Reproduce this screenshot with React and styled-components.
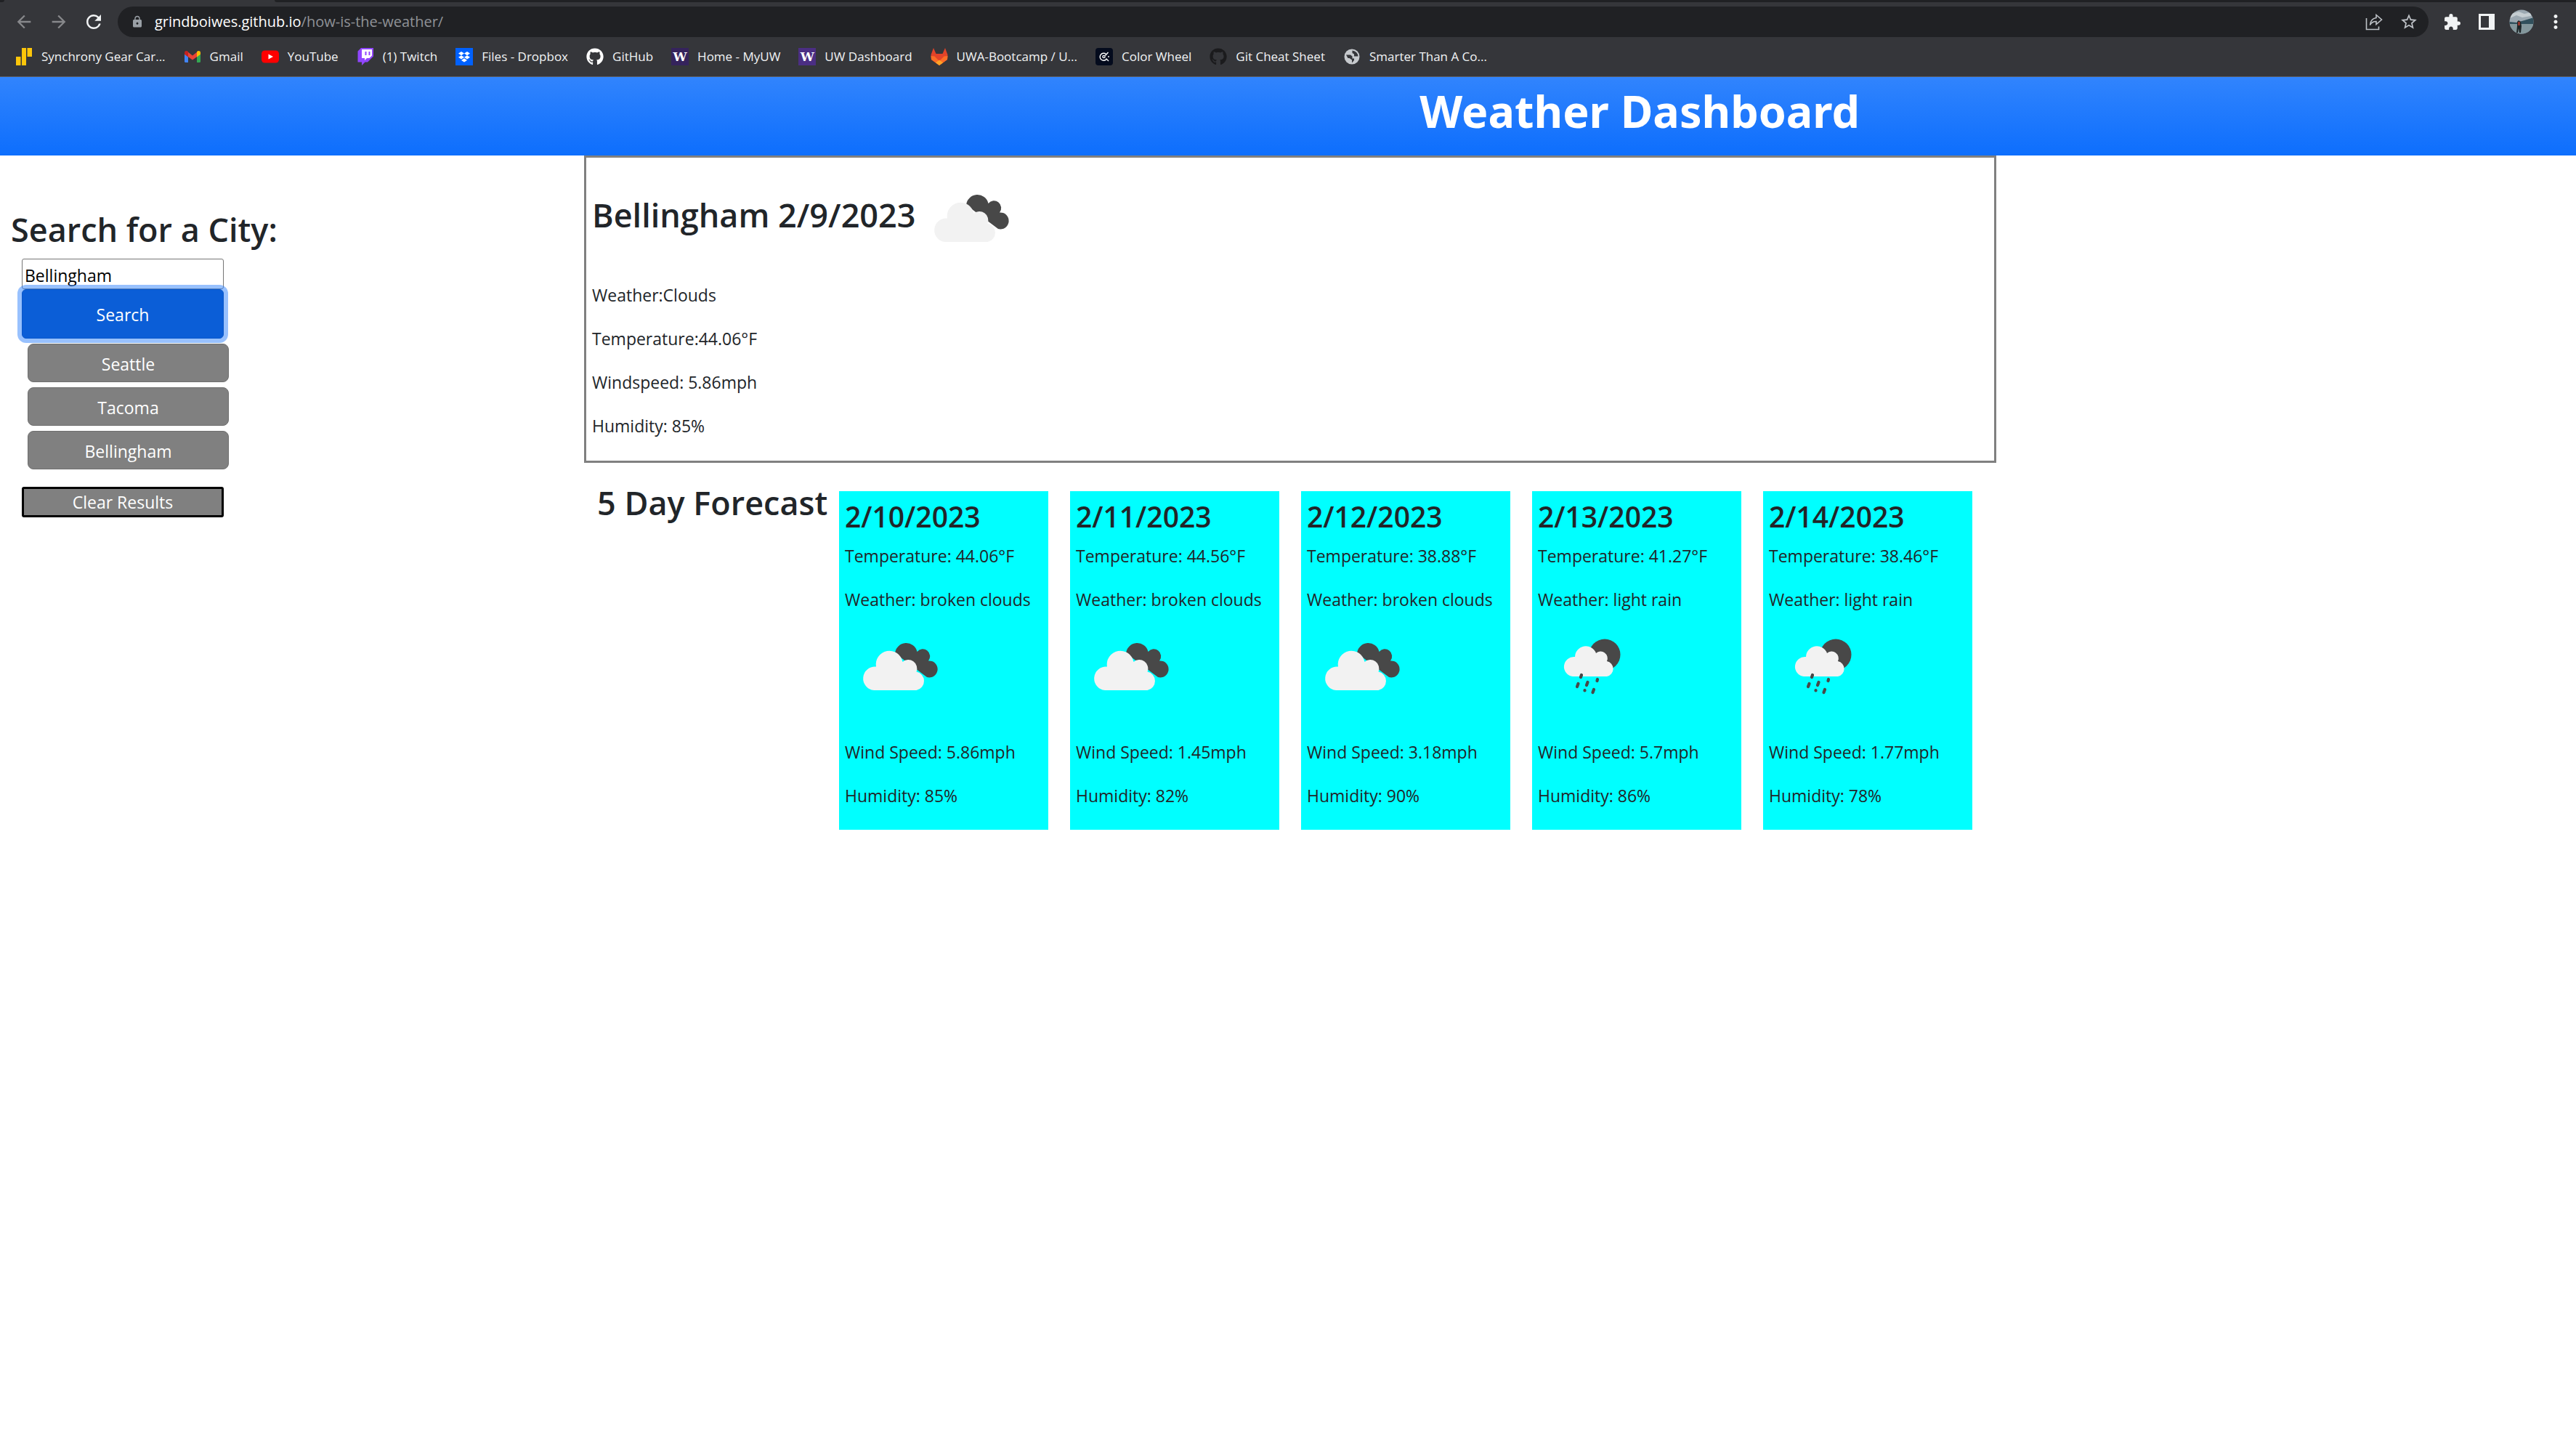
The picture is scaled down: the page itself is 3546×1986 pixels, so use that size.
import React from 'react';
import styled, { createGlobalStyle } from 'styled-components';
import { FaGithub } from 'react-icons/fa';
import { MdArrowBack, MdArrowForward, MdRefresh, MdLock, MdExtension, MdMoreVert, MdStarOutline } from 'react-icons/md';

const UI_FONT = '"Open Sans", "Noto Sans", sans-serif';

const GlobalStyle = createGlobalStyle`
  *, *::before, *::after { box-sizing: border-box; }
  body {
    margin: 0;
    background: #fff;
    color: #212529;
    font-family: ${UI_FONT};
    font-size: 23px;
    line-height: 36px;
  }
  h1, h2, h3, p, ul { margin: 0; padding: 0; }
  button, input { font: inherit; }
`;

/* ---------- browser frame ---------- */

const Browser = styled.div`
  background: #35363a;
  border-bottom: 1px solid #5b5c60;
`;

const TabStrip = styled.div`
  display: grid;
  grid-template-columns: 6px 372px 1fr;
  height: 3px;
  background: #35363a;
`;

const TabGap = styled.div`
  background: #202124;
  grid-column: ${(p) => p.$column};
  border-bottom-right-radius: ${(p) => (p.$column === 1 ? '3px' : 0)};
  border-bottom-left-radius: ${(p) => (p.$column === 3 ? '3px' : 0)};
`;

const Toolbar = styled.div`
  display: flex;
  align-items: center;
  height: 54px;
  padding: 0 13px 0 18px;
`;

const ToolButton = styled.button`
  display: flex;
  align-items: center;
  justify-content: center;
  flex: none;
  width: ${(p) => p.$width || 48}px;
  height: 40px;
  padding: 0;
  border: 0;
  background: none;
  color: ${(p) => p.$color || '#f1f3f4'};
`;

const NavGroup = styled.div`
  display: flex;
  width: 144px;
  margin-left: -9px;
  margin-right: 9px;
`;

const AddressBar = styled.div`
  display: flex;
  flex: 1;
  align-items: center;
  height: 42px;
  padding: 0 3px 0 18px;
  border-radius: 21px;
  background: #202124;
  color: #9aa0a6;
`;

const Address = styled.a`
  flex: 1;
  margin-left: 15px;
  color: #8f9297;
  font-size: 20px;
  text-decoration: none;
`;

const Host = styled.span`
  color: #fff;
`;

const Bookmarks = styled.nav`
  display: flex;
  align-items: center;
  gap: 25px;
  height: 48px;
  padding: 0 21px 6px;
`;

const Bookmark = styled.a`
  display: flex;
  align-items: center;
  gap: 12px;
  color: #f1f3f4;
  font-size: 17px;
  line-height: 24px;
  text-decoration: none;
  white-space: nowrap;
`;

const Glyph = styled.svg`
  display: block;
  flex: none;
`;

const SynchronyIcon = () => (
  <Glyph width="24" height="24" viewBox="0 0 24 24" fill="#fdc60a">
    <path d="M1 12h6.500v12H1zM9 0h6v24H9zM16.500 0H23v12h-6.500z" />
  </Glyph>
);

const GmailIcon = () => (
  <Glyph width="24" height="24" viewBox="0 0 24 24">
    <path fill="#4285f4" d="M1 8l5 4v8H2.500Q1 20 1 18.500z" />
    <path fill="#34a853" d="M18 12l5-4v10.500Q23 20 21.500 20H18z" />
    <path fill="#ea4335" d="M5 5l7 5.500L19 5v6.500l-7 5-7-5z" />
    <path fill="#c5221f" d="M1 6.500Q1 4 3.500 4 5 4 6 5.200v7.300L1 8.800z" />
    <path fill="#fbbc04" d="M23 6.500Q23 4 20.500 4 19 4 18 5.200v7.300l5-3.700z" />
  </Glyph>
);

const YouTubeIcon = () => (
  <Glyph width="24" height="24" viewBox="0 0 24 24">
    <rect x="0" y="3.500" width="24" height="17" rx="4.500" fill="#f00" />
    <path d="M9.500 8.500l6.500 3.500-6.500 3.500z" fill="#fff" />
  </Glyph>
);

const TwitchIcon = () => (
  <Glyph width="24" height="24" viewBox="0 0 24 24">
    <path fill="#9146ff" d="M6 0L1.500 4.500v15H7V24l4.500-4.500H15l8-8V0z" />
    <path fill="#fff" d="M7 2h14v8.500L17.500 14H14l-3 3v-3H7z" />
    <path fill="#9146ff" d="M11.500 5h2v5h-2zM16.500 5h2v5h-2z" />
  </Glyph>
);

const DropboxIcon = () => (
  <Glyph width="24" height="24" viewBox="0 0 24 24">
    <path fill="#0061ff" d="M0 0h24v24H0z" />
    <path fill="#fff" d="M8 5l4 2.600-4 2.600-4-2.600zM16 5l4 2.600-4 2.600-4-2.600zM8 10.200l4 2.600-4 2.600-4-2.600zM16 10.200l4 2.600-4 2.600-4-2.600zM12 14.300l4 2.600-4 2.600-4-2.600z" />
  </Glyph>
);

const UwBadge = styled.span`
  display: flex;
  align-items: center;
  justify-content: center;
  width: 24px;
  height: 24px;
  background: ${(p) => p.$color};
  color: #fff;
  font: 700 17px/24px "DejaVu Serif", "Liberation Serif", serif;
`;

const GitLabIcon = () => (
  <Glyph width="24" height="24" viewBox="0 0 24 24">
    <path fill="#e24329" d="M4 0l3.500 8h9L20 0l3.500 9.500L23 16 12 24 1 16 .5 9.500z" />
    <path fill="#fc6d26" d="M.5 11L1 16l11 8 11-8 .5-5-5 .5L12 18l-6.500-6.500z" />
    <path fill="#fca326" d="M7 20.300L12 16.500l5 3.800L12 24z" />
  </Glyph>
);

const ColorWheelIcon = () => (
  <Glyph width="24" height="24" viewBox="0 0 24 24" fill="none" stroke="#fff" strokeWidth="1.400">
    <rect width="24" height="24" rx="4" fill="#040b1d" stroke="none" />
    <path d="M14.500 8.500A5 5 0 1 0 15 15.500" />
    <circle cx="11.500" cy="12" r="1.600" />
    <path d="M13.500 10.500l4-4.500M14.500 14.500l3.500 3.500M18 11v2" />
  </Glyph>
);

const GlobeIcon = () => (
  <Glyph width="24" height="24" viewBox="0 0 24 24">
    <circle cx="12" cy="12" r="10.500" fill="#c6c9cd" />
    <path fill="#35363a" d="M4 9.500h6l2.500 2v3H15V17l-3 3.500v-4L8.500 14H6.500zM12.500 3.500v3.500l2.500 1.500v3h5.500Q20 5 12.500 3.500z" />
  </Glyph>
);

const ShareIcon = () => (
  <Glyph width="24" height="24" viewBox="0 0 24 24" fill="none" stroke="#bdc1c6" strokeWidth="1.600">
    <path d="M1.500 7v15.500h17v-4" />
    <path d="M15 2.500l7.500 6.500L15 15.500v-4q-6 0-8.500 5Q7 8 15 6.500z" />
  </Glyph>
);

const SidePanelIcon = () => (
  <Glyph width="22" height="22" viewBox="0 0 22 22" fill="#f1f3f4">
    <path fillRule="evenodd" d="M0 0h22v22H0zM3 3v16h11V3z" />
  </Glyph>
);

const AvatarIcon = () => (
  <Glyph width="34" height="34" viewBox="0 0 34 34">
    <defs>
      <clipPath id="avatar"><circle cx="17" cy="17" r="16.500" /></clipPath>
    </defs>
    <g clipPath="url(#avatar)">
      <path fill="#9ba8b1" d="M0 0h34v34H0z" />
      <path fill="#c5cdd1" d="M3 6l10-3 8 3 9-2v5l-12 2-8-3-9 4z" />
      <path fill="#31505c" d="M0 17l10 1 11-3 13-4v9H0z" />
      <path fill="#83979c" d="M0 20h34v14H0z" />
      <path fill="#1d2527" d="M11 17l2-2 3 2 1 6-1 9h-2l-1-6-1 6h-2l1-9z" />
      <path fill="#92372f" d="M12 17h3v5h-3z" />
    </g>
  </Glyph>
);

/* ---------- page ---------- */

const Header = styled.header`
  height: 108px;
  padding: 7px 0 0 55%;
  background: linear-gradient(180deg, #3184fd, #0d6efd);
`;

const Title = styled.h1`
  padding-left: 4px;
  color: #fff;
  font-family: "Noto Sans", "Open Sans", sans-serif;
  font-size: 61px;
  font-weight: 700;
  line-height: 80px;
`;

const Page = styled.div`
  display: grid;
  grid-template-columns: 804fr 1944fr 798fr;
  align-items: start;
`;

const Heading = styled.h2`
  font-size: 45px;
  font-weight: 600;
  line-height: 58px;
`;

const Sidebar = styled.aside`
  padding: 73px 15px;
`;

const SearchForm = styled.form`
  display: flex;
  flex-direction: column;
  width: 278px;
  margin: 11px 15px 0;
`;

const CityInput = styled.input`
  height: 42px;
  padding: 4px 3px 0;
  border: 1px solid #767676;
  border-radius: 3px;
  background: #fff;
  color: #000;
`;

const SearchButton = styled.button`
  height: 68px;
  padding: 2px 0 0;
  border: 1px solid #0a58ca;
  border-radius: 6px;
  background: #0b5ed7;
  color: #fff;
  box-shadow: 0 0 0 6px rgba(49, 132, 253, 0.5);
`;

const History = styled.ul`
  display: flex;
  flex-direction: column;
  gap: 7px;
  width: 277px;
  margin: 7px 0 24px 23px;
  list-style: none;
`;

const HistoryButton = styled.button`
  display: block;
  width: 100%;
  height: 53px;
  padding: 2px 0 0;
  border: 1px solid #6f6f6f;
  border-radius: 8px;
  background: #808080;
  color: #fff;
`;

const ClearButton = styled.button`
  display: block;
  width: 278px;
  height: 42px;
  margin-left: 15px;
  padding: 0;
  border: 3px solid #000;
  border-radius: 3px;
  background: #808080;
  color: #fff;
  line-height: 34px;
`;

const Current = styled.section`
  padding: 9px 8px 6px;
  border: 3px solid #808080;
`;

const CurrentHeading = styled(Heading)`
  margin-bottom: 12px;
`;

const Detail = styled.p`
  margin-bottom: 24px;
`;

const Forecast = styled.section`
  display: flex;
  align-items: flex-start;
  padding: 26px 33px 0 18px;
`;

const ForecastHeading = styled(Heading)`
  flex: 1;
  white-space: nowrap;
`;

const Cards = styled.div`
  display: grid;
  grid-template-columns: repeat(5, 288px);
  gap: 30px;
  padding-top: 13px;
`;

const Card = styled.article`
  padding: 6px 8px 5px;
  background: #00ffff;
`;

const CardDate = styled.h3`
  margin-bottom: 7px;
  font-size: 39px;
  font-weight: 600;
  line-height: 58px;
`;

const CardWeather = styled.p`
  display: block;
`;

const WeatherImage = styled.svg`
  display: ${(p) => (p.$inline ? 'inline-block' : 'block')};
  vertical-align: middle;
  width: 150px;
  height: 150px;
  margin-bottom: ${(p) => (p.$inline ? 0 : '24px')};
`;

const CloudsIcon = ({ inline }) => (
  <WeatherImage $inline={inline} viewBox="0 0 150 150" role="img" aria-label="broken clouds">
    <path fill="#484848" d="M69 56a15.500 15.500 0 0 1 30.500-2 9.500 9.500 0 0 1 15.500 12.500 11.500 11.500 0 1 1-2 22.500z" />
    <path fill="#f2f2f2" d="M40 107a16.300 16.300 0 1 1 3-32.500 18.500 18.500 0 0 1 36.500-6.500 12 12 0 0 1 19 13.500 13 13 0 0 1 0 25.500z" />
  </WeatherImage>
);

const RainIcon = () => (
  <WeatherImage viewBox="-11 0 150 150" role="img" aria-label="light rain">
    <circle cx="81" cy="58" r="21.500" fill="#484848" />
    <path fill="#f2f2f2" d="M37 88a13.500 13.500 0 1 1 3-27 15 15 0 0 1 29-5 9.500 9.500 0 0 1 15 11 10.700 10.700 0 0 1 0 21z" />
    <path fill="none" stroke="#484848" strokeWidth="4.200" strokeLinecap="round" d="M49 86l-1 3M44.500 98l-1.500 4M57.500 96l-1.500 4M71 92l-.5 2M53.500 107v.5M66 106l-1.500 4" />
  </WeatherImage>
);

const bookmarks = [
  { label: 'Synchrony Gear Car...', icon: <SynchronyIcon /> },
  { label: 'Gmail', icon: <GmailIcon /> },
  { label: 'YouTube', icon: <YouTubeIcon /> },
  { label: '(1) Twitch', icon: <TwitchIcon /> },
  { label: 'Files - Dropbox', icon: <DropboxIcon /> },
  { label: 'GitHub', icon: <FaGithub size={24} color="#fff" /> },
  { label: 'Home - MyUW', icon: <UwBadge $color="#35235c">W</UwBadge> },
  { label: 'UW Dashboard', icon: <UwBadge $color="#4b2e83">W</UwBadge> },
  { label: 'UWA-Bootcamp / U...', icon: <GitLabIcon /> },
  { label: 'Color Wheel', icon: <ColorWheelIcon /> },
  { label: 'Git Cheat Sheet', icon: <FaGithub size={24} color="#1b1b1d" /> },
  { label: 'Smarter Than A Co...', icon: <GlobeIcon /> },
];

const cities = ['Seattle', 'Tacoma', 'Bellingham'];

const days = [
  { date: '2/10/2023', temp: '44.06', weather: 'broken clouds', wind: '5.86', humidity: 85 },
  { date: '2/11/2023', temp: '44.56', weather: 'broken clouds', wind: '1.45', humidity: 82 },
  { date: '2/12/2023', temp: '38.88', weather: 'broken clouds', wind: '3.18', humidity: 90 },
  { date: '2/13/2023', temp: '41.27', weather: 'light rain', wind: '5.7', humidity: 86 },
  { date: '2/14/2023', temp: '38.46', weather: 'light rain', wind: '1.77', humidity: 78 },
];

export default function App() {
  return (
    <>
      <GlobalStyle />
      <Browser>
        <TabStrip>
          <TabGap $column={1} />
          <TabGap $column={3} />
        </TabStrip>
        <Toolbar>
          <NavGroup>
            <ToolButton $color="#87888b" aria-label="Back"><MdArrowBack size={28} /></ToolButton>
            <ToolButton $color="#87888b" aria-label="Forward"><MdArrowForward size={28} /></ToolButton>
            <ToolButton aria-label="Reload"><MdRefresh size={30} /></ToolButton>
          </NavGroup>
          <AddressBar>
            <MdLock size={18} />
            <Address href="#"><Host>grindboiwes.github.io</Host>/how-is-the-weather/</Address>
            <ToolButton $color="#bdc1c6" aria-label="Share"><ShareIcon /></ToolButton>
            <ToolButton $color="#bdc1c6" aria-label="Bookmark this page"><MdStarOutline size={26} /></ToolButton>
          </AddressBar>
          <ToolButton $width={64} aria-label="Extensions"><MdExtension size={25} /></ToolButton>
          <ToolButton $width={32} aria-label="Side panel"><SidePanelIcon /></ToolButton>
          <ToolButton $width={64} aria-label="Profile"><AvatarIcon /></ToolButton>
          <ToolButton $width={30} aria-label="Menu"><MdMoreVert size={30} /></ToolButton>
        </Toolbar>
        <Bookmarks aria-label="Bookmarks">
          {bookmarks.map((b) => (
            <Bookmark key={b.label} href="#">{b.icon}{b.label}</Bookmark>
          ))}
        </Bookmarks>
      </Browser>

      <Header>
        <Title>Weather Dashboard</Title>
      </Header>

      <Page>
        <Sidebar>
          <Heading as="label" htmlFor="city">Search for a City:</Heading>
          <SearchForm onSubmit={(e) => e.preventDefault()}>
            <CityInput id="city" type="text" defaultValue="Bellingham" />
            <SearchButton type="submit">Search</SearchButton>
          </SearchForm>
          <History>
            {cities.map((city) => (
              <li key={city}><HistoryButton type="button">{city}</HistoryButton></li>
            ))}
          </History>
          <ClearButton type="button">Clear Results</ClearButton>
        </Sidebar>

        <main>
          <Current>
            <CurrentHeading>Bellingham 2/9/2023<CloudsIcon inline /></CurrentHeading>
            <Detail>Weather:Clouds</Detail>
            <Detail>Temperature:44.06°F</Detail>
            <Detail>Windspeed: 5.86mph</Detail>
            <Detail>Humidity: 85%</Detail>
          </Current>
          <Forecast>
            <ForecastHeading>5 Day Forecast</ForecastHeading>
            <Cards>
              {days.map((d) => (
                <Card key={d.date}>
                  <CardDate>{d.date}</CardDate>
                  <Detail>Temperature: {d.temp}°F</Detail>
                  <CardWeather>Weather: {d.weather}</CardWeather>
                  {d.weather === 'light rain' ? <RainIcon /> : <CloudsIcon />}
                  <Detail>Wind Speed: {d.wind}mph</Detail>
                  <Detail>Humidity: {d.humidity}%</Detail>
                </Card>
              ))}
            </Cards>
          </Forecast>
        </main>
      </Page>
    </>
  );
}
